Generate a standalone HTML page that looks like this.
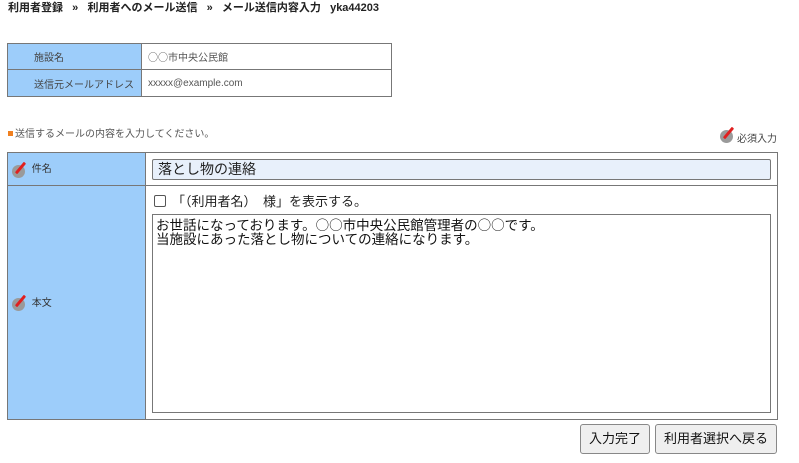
<!DOCTYPE html>
<html><head><meta charset="utf-8"><style>
*{box-sizing:border-box}
body{margin:0;width:799px;height:463px;background:#fff;font-family:"Liberation Sans","Noto Sans CJK JP",sans-serif;color:#333;position:relative;overflow:hidden}
.abs{position:absolute}
.cjk{font-family:"Noto Sans CJK JP",sans-serif}
.crumb{left:8px;top:1px;font-size:11px;font-weight:bold;line-height:14px;color:#222}
table{border-collapse:collapse;position:absolute}
td{border:1px solid #777;font-size:10px;padding:0}
.lab{background:#9dcdfa}
.ic{display:inline-block;width:17px;height:17px;position:relative;vertical-align:middle}
.ic:before{content:"";position:absolute;left:0;top:4px;width:13px;height:13px;border-radius:50%;background:#9a9a9a}
.ic:after{content:"";position:absolute;left:7px;top:0;width:3px;height:14px;background:#e02020;transform:rotate(40deg);border-radius:1px}
.btn{position:absolute;top:424px;height:30px;border:1px solid #888;border-radius:3px;background:#efefef;font-size:13px;line-height:28px;text-align:center;color:#111}
</style></head><body>
<div class="abs crumb">利用者登録&nbsp;&nbsp;&nbsp;»&nbsp;&nbsp;&nbsp;利用者へのメール送信&nbsp;&nbsp;&nbsp;»&nbsp;&nbsp;&nbsp;メール送信内容入力&nbsp;&nbsp;&nbsp;yka44203</div>
<table style="left:7px;top:43px;width:385px">
<tr style="height:26px"><td class="lab" style="width:134px;padding-left:26px;color:#444">施設名</td><td style="padding-left:6px;color:#555"><span class="cjk">○○</span>市中央公民館</td></tr>
<tr style="height:27px"><td class="lab" style="padding-left:26px;color:#444">送信元メールアドレス</td><td style="padding-left:6px;color:#555">xxxxx@example.com</td></tr>
</table>
<div class="abs" style="left:8px;top:125px;font-size:10px;color:#555"><span style="display:inline-block;width:5px;height:5px;background:#f08020;margin-right:2px;vertical-align:1px"></span>送信するメールの内容を入力してください。</div>
<div class="abs" style="left:720px;top:125px;font-size:10px;color:#444"><span class="ic"></span><span style="position:relative;top:5px">必須入力</span></div>
<table style="left:7px;top:152px;width:771px">
<tr style="height:33px"><td class="lab" style="width:138px;padding-left:4px"><span class="ic"></span> 件名</td>
<td style="padding:5px 6px"><div style="height:21px;border:1px solid #777;border-radius:2px;background:#e8f0fb;font-size:14px;line-height:19px;padding-left:5px;color:#222">落とし物の連絡</div></td></tr>
<tr style="height:233px"><td class="lab" style="padding-left:4px"><span class="ic"></span> 本文</td>
<td style="padding:6px 6px 6px 6px;vertical-align:top">
<div class="cjk" style="font-size:13px;height:22px;line-height:18px;color:#222;padding-left:2px"><span style="display:inline-block;width:12px;height:12px;border:1px solid #555;border-radius:2px;vertical-align:-1px;margin-right:6px"></span>「（利用者名）　様」を表示する。</div>
<div class="cjk" style="height:199px;border:1px solid #777;font-size:13.5px;line-height:14px;padding:2px 3px;color:#111">お世話になっております。○○市中央公民館管理者の○○です。<br>当施設にあった落とし物についての連絡になります。</div>
</td></tr>
</table>
<div class="btn" style="left:580px;width:70px">入力完了</div>
<div class="btn" style="left:655px;width:122px">利用者選択へ戻る</div>
</body></html>
